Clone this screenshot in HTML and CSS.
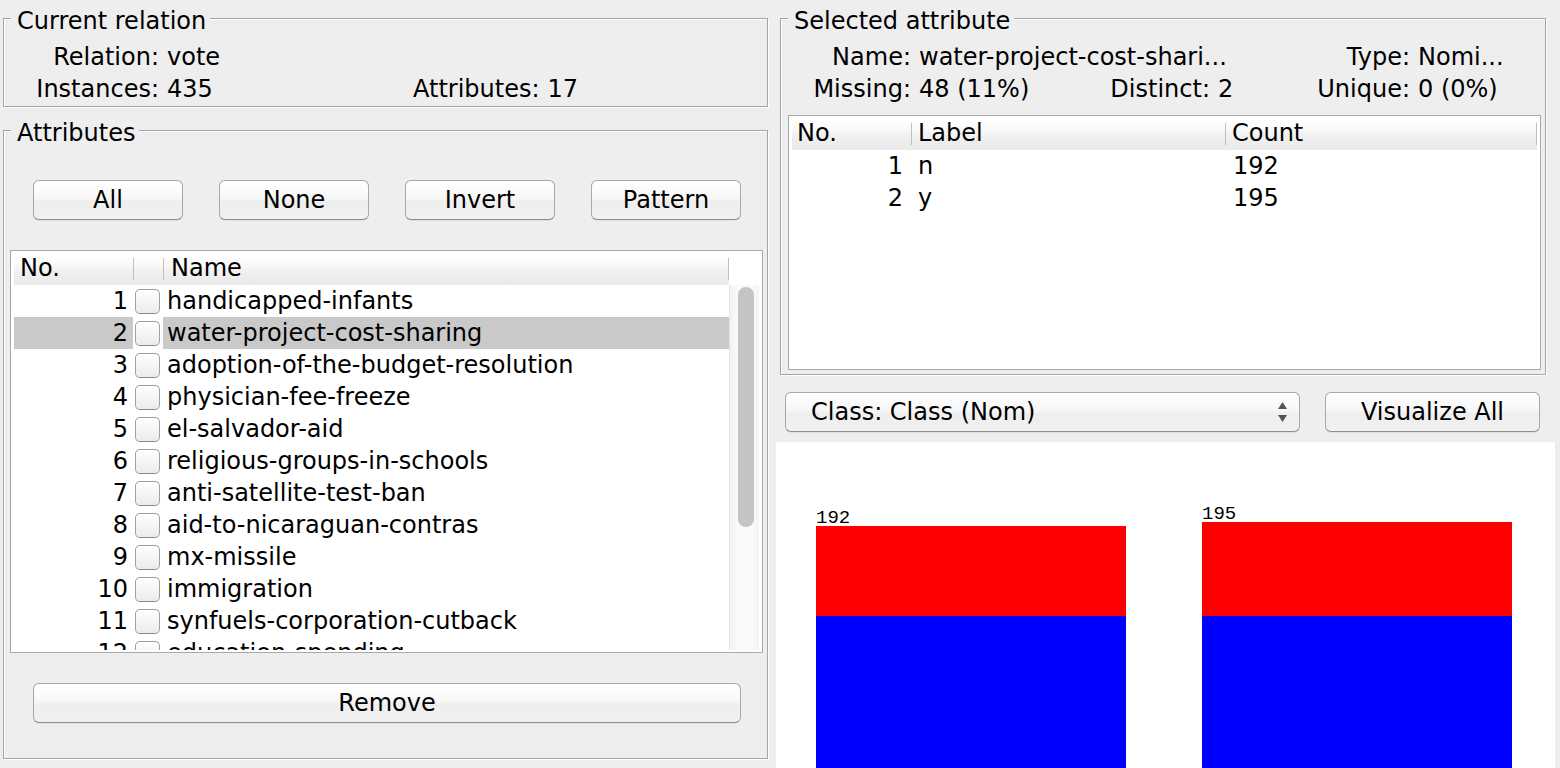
FILE: index.html
```html
<!DOCTYPE html>
<html>
<head>
<meta charset="utf-8">
<title>Weka Explorer - Preprocess</title>
<link rel="stylesheet" href="styles.css">
</head>
<body>
<div class="app">
  <div class="left">
    <fieldset class="group rel">
      <legend>Current relation</legend>
      <div class="relgrid">
        <span class="lab">Relation:</span><span class="val">vote</span><span></span><span></span>
        <span class="lab">Instances:</span><span class="val">435</span><span class="lab2">Attributes:</span><span class="val">17</span>
      </div>
    </fieldset>
    <fieldset class="group attrs">
      <legend>Attributes</legend>
      <div class="btnrow">
        <button class="btn">All</button>
        <button class="btn">None</button>
        <button class="btn">Invert</button>
        <button class="btn">Pattern</button>
      </div>
      <div class="tbl attrtbl">
        <div class="thead h3">
          <div class="th first">No.</div>
          <div class="th"></div>
          <div class="th last">Name</div>
        </div>
        <div class="corner"></div>
        <div class="tbody">
          <div class="tr"><span class="no">1</span><span class="cbcell"><span class="cb"></span></span><span class="name">handicapped-infants</span></div>
          <div class="tr selrow"><span class="no">2</span><span class="cbcell"><span class="cb"></span></span><span class="name">water-project-cost-sharing</span></div>
          <div class="tr"><span class="no">3</span><span class="cbcell"><span class="cb"></span></span><span class="name">adoption-of-the-budget-resolution</span></div>
          <div class="tr"><span class="no">4</span><span class="cbcell"><span class="cb"></span></span><span class="name">physician-fee-freeze</span></div>
          <div class="tr"><span class="no">5</span><span class="cbcell"><span class="cb"></span></span><span class="name">el-salvador-aid</span></div>
          <div class="tr"><span class="no">6</span><span class="cbcell"><span class="cb"></span></span><span class="name">religious-groups-in-schools</span></div>
          <div class="tr"><span class="no">7</span><span class="cbcell"><span class="cb"></span></span><span class="name">anti-satellite-test-ban</span></div>
          <div class="tr"><span class="no">8</span><span class="cbcell"><span class="cb"></span></span><span class="name">aid-to-nicaraguan-contras</span></div>
          <div class="tr"><span class="no">9</span><span class="cbcell"><span class="cb"></span></span><span class="name">mx-missile</span></div>
          <div class="tr"><span class="no">10</span><span class="cbcell"><span class="cb"></span></span><span class="name">immigration</span></div>
          <div class="tr"><span class="no">11</span><span class="cbcell"><span class="cb"></span></span><span class="name">synfuels-corporation-cutback</span></div>
          <div class="tr"><span class="no">12</span><span class="cbcell"><span class="cb"></span></span><span class="name">education-spending</span></div>
        </div>
        <div class="vscroll"><div class="thumb"></div></div>
      </div>
      <button class="btn remove">Remove</button>
    </fieldset>
  </div>

  <div class="right">
    <fieldset class="group sel">
      <legend>Selected attribute</legend>
      <div class="selgrid">
        <span class="lab">Name:</span><span class="val span3">water-project-cost-shari...</span><span class="lab">Type:</span><span class="val">Nomi...</span>
        <span class="lab">Missing:</span><span class="val">48 (11%)</span><span class="lab">Distinct:</span><span class="val">2</span><span class="lab">Unique:</span><span class="val">0 (0%)</span>
      </div>
      <div class="tbl valtbl">
        <div class="thead v3">
          <div class="th first">No.</div>
          <div class="th">Label</div>
          <div class="th last">Count</div>
        </div>
        <div class="tbody">
          <div class="vr"><span class="no">1</span><span class="lbl">n</span><span class="cnt">192</span></div>
          <div class="vr"><span class="no">2</span><span class="lbl">y</span><span class="cnt">195</span></div>
        </div>
      </div>
    </fieldset>

    <div class="classrow">
      <div class="combo">
        <span>Class: Class (Nom)</span>
        <svg class="arrows" width="9" height="20" viewBox="0 0 9 20"><polygon points="4.5,0 9,7 0,7" fill="#555"/><polygon points="0,13 9,13 4.5,20" fill="#555"/></svg>
      </div>
      <button class="btn vis">Visualize All</button>
    </div>

    <div class="chart">
      <div class="barcol">
        <div class="blabel">192</div>
        <div class="red" style="height:90px"></div>
        <div class="blue" style="height:166px"></div>
      </div>
      <div class="barcol">
        <div class="blabel">195</div>
        <div class="red" style="height:94px"></div>
        <div class="blue" style="height:166px"></div>
      </div>
    </div>
  </div>
</div>
</body>
</html>
```

FILE: styles.css
```css
* { box-sizing: border-box; }

html, body {
  margin: 0;
  height: 100%;
  overflow: hidden;
  background: #eeeeee;
}

body {
  font-family: "DejaVu Sans", "Liberation Sans", sans-serif;
  font-size: 24px;
  color: #000;
}

.app {
  display: flex;
  align-items: flex-start;
  padding: 3px 0 0 3px;
}

.left {
  width: 765px;
  flex: none;
  display: flex;
  flex-direction: column;
}

.right {
  width: 780px;
  margin-left: 8px;
  flex: none;
  display: flex;
  flex-direction: column;
}

/* titled etched border */
.group {
  margin: 0;
  padding: 0;
  min-width: 0;
  border: 1px solid #a4a4a4;
  box-shadow: 1px 1px 0 #ffffff, inset 1px 1px 0 #ffffff;
}

.group > legend {
  margin-left: 7px;
  padding: 6px 4px 0 6px;
  height: 30px;
  line-height: 24px;
  background: #eeeeee;
}

.relgrid {
  display: grid;
  grid-template-columns: 155px 254px auto 1fr;
  line-height: 32px;
  padding: 8px 0 1px;
}

.lab { text-align: right; white-space: nowrap; }
.lab2 { white-space: nowrap; }
.val { padding-left: 8px; white-space: nowrap; }

.attrs {
  margin-top: 8px;
  padding: 35px 0 35px;
}

.btnrow {
  display: grid;
  grid-template-columns: repeat(4, 150px);
  column-gap: 36px;
  margin-left: 29px;
}

.btn {
  height: 40px;
  margin: 0;
  padding: 0;
  font-family: inherit;
  font-size: 24px;
  color: #000;
  border: 1px solid #a8a8a8;
  border-bottom-color: #8e8e8e;
  border-radius: 6px;
  background: linear-gradient(#ffffff 0%, #f7f7f7 45%, #eeeeee 55%, #f1f1f1 100%);
  box-shadow: 0 1px 0 rgba(0, 0, 0, 0.06);
}

.remove {
  width: 708px;
  margin: 30px 0 0 29px;
}

/* tables */
.tbl {
  display: grid;
  background: #ffffff;
  border: 1px solid #a9a9a9;
  padding: 2px 3px;
}

.attrtbl {
  width: 753px;
  height: 403px;
  margin: 30px 0 0 6px;
  grid-template-columns: 715px 30px;
  grid-template-rows: 32px 365px;
}

.thead {
  display: grid;
  background: linear-gradient(#ffffff 0%, #fbfbfb 30%, #efefef 60%, #eaeaea 100%);
}

.thead.h3 { grid-template-columns: 119px 30px 1fr; }
.thead.v3 { grid-template-columns: 119px 314px 1fr; }

.th {
  line-height: 30px;
  padding-left: 8px;
  white-space: nowrap;
  background: linear-gradient(#bfbfbf, #bfbfbf) left center / 1px 22px no-repeat;
}

.th.first {
  padding-left: 6px;
  background: none;
}

.th.last {
  background:
    linear-gradient(#bfbfbf, #bfbfbf) left center / 1px 22px no-repeat,
    linear-gradient(#bfbfbf, #bfbfbf) right center / 1px 22px no-repeat;
}

.valtbl .th.first { padding-left: 5px; }
.valtbl .th { padding-left: 7px; }

.corner { background: #ffffff; }

.tbody { overflow: hidden; }

.tr {
  display: grid;
  grid-template-columns: 119px 30px 1fr;
  height: 32px;
  line-height: 32px;
  white-space: nowrap;
}

.tr .no { text-align: right; padding-right: 5px; }
.tr .cbcell { display: flex; align-items: center; padding-left: 2px; }
.tr .name { padding-left: 4px; }
.tr.selrow .no, .tr.selrow .name { background: #c9c9c9; }

.cb {
  width: 25px;
  height: 25px;
  border: 1px solid #a0a0a0;
  border-bottom-color: #8c8c8c;
  border-radius: 5px;
  background: linear-gradient(#ffffff, #f3f3f3 60%, #ebebeb);
}

.vscroll {
  border-left: 1px solid #e4e4e4;
  background: linear-gradient(to right, #f1f1f1, #fafafa 25%, #fafafa 75%, #f3f3f3);
  padding: 2px 0 0 8px;
}

.thumb {
  width: 16px;
  height: 240px;
  border-radius: 8px;
  background: #c4c4c4;
}

/* selected attribute */
.sel {
  width: 766px;
  margin-left: 4px;
  padding: 0 0 4px;
}

.selgrid {
  display: grid;
  grid-template-columns: 130px 194px 105px 90px 110px 1fr;
  line-height: 32px;
  padding-top: 8px;
}

.span3 { grid-column: span 3; }

.valtbl {
  width: 753px;
  height: 255px;
  margin: 10px 0 0 7px;
  grid-template-columns: 1fr;
  grid-template-rows: 32px 217px;
}

.vr {
  display: grid;
  grid-template-columns: 119px 314px 1fr;
  height: 32px;
  line-height: 32px;
}

.vr .no { text-align: right; padding-right: 8px; }
.vr .lbl { padding-left: 7px; }
.vr .cnt { padding-left: 8px; }

/* class row */
.classrow {
  display: flex;
  gap: 25px;
  margin: 17px 0 0 9px;
}

.combo {
  width: 515px;
  height: 40px;
  display: flex;
  align-items: center;
  padding: 0 12px 0 25px;
  border: 1px solid #a8a8a8;
  border-bottom-color: #8e8e8e;
  border-radius: 6px;
  background: linear-gradient(#ffffff 0%, #f7f7f7 45%, #eeeeee 55%, #f1f1f1 100%);
  box-shadow: 0 1px 0 rgba(0, 0, 0, 0.06);
}

.arrows { margin-left: auto; }

.vis { width: 215px; }

/* chart */
.chart {
  width: 779px;
  height: 340px;
  margin-top: 10px;
  background: #ffffff;
  display: flex;
  align-items: flex-end;
  gap: 76px;
  padding-left: 40px;
}

.barcol {
  width: 310px;
  display: flex;
  flex-direction: column;
}

.blabel {
  font-family: "Liberation Mono", "DejaVu Sans Mono", monospace;
  font-size: 19px;
  line-height: 16px;
  height: 16px;
}

.red { background: #ff0000; }
.blue { background: #0000ff; }
```
